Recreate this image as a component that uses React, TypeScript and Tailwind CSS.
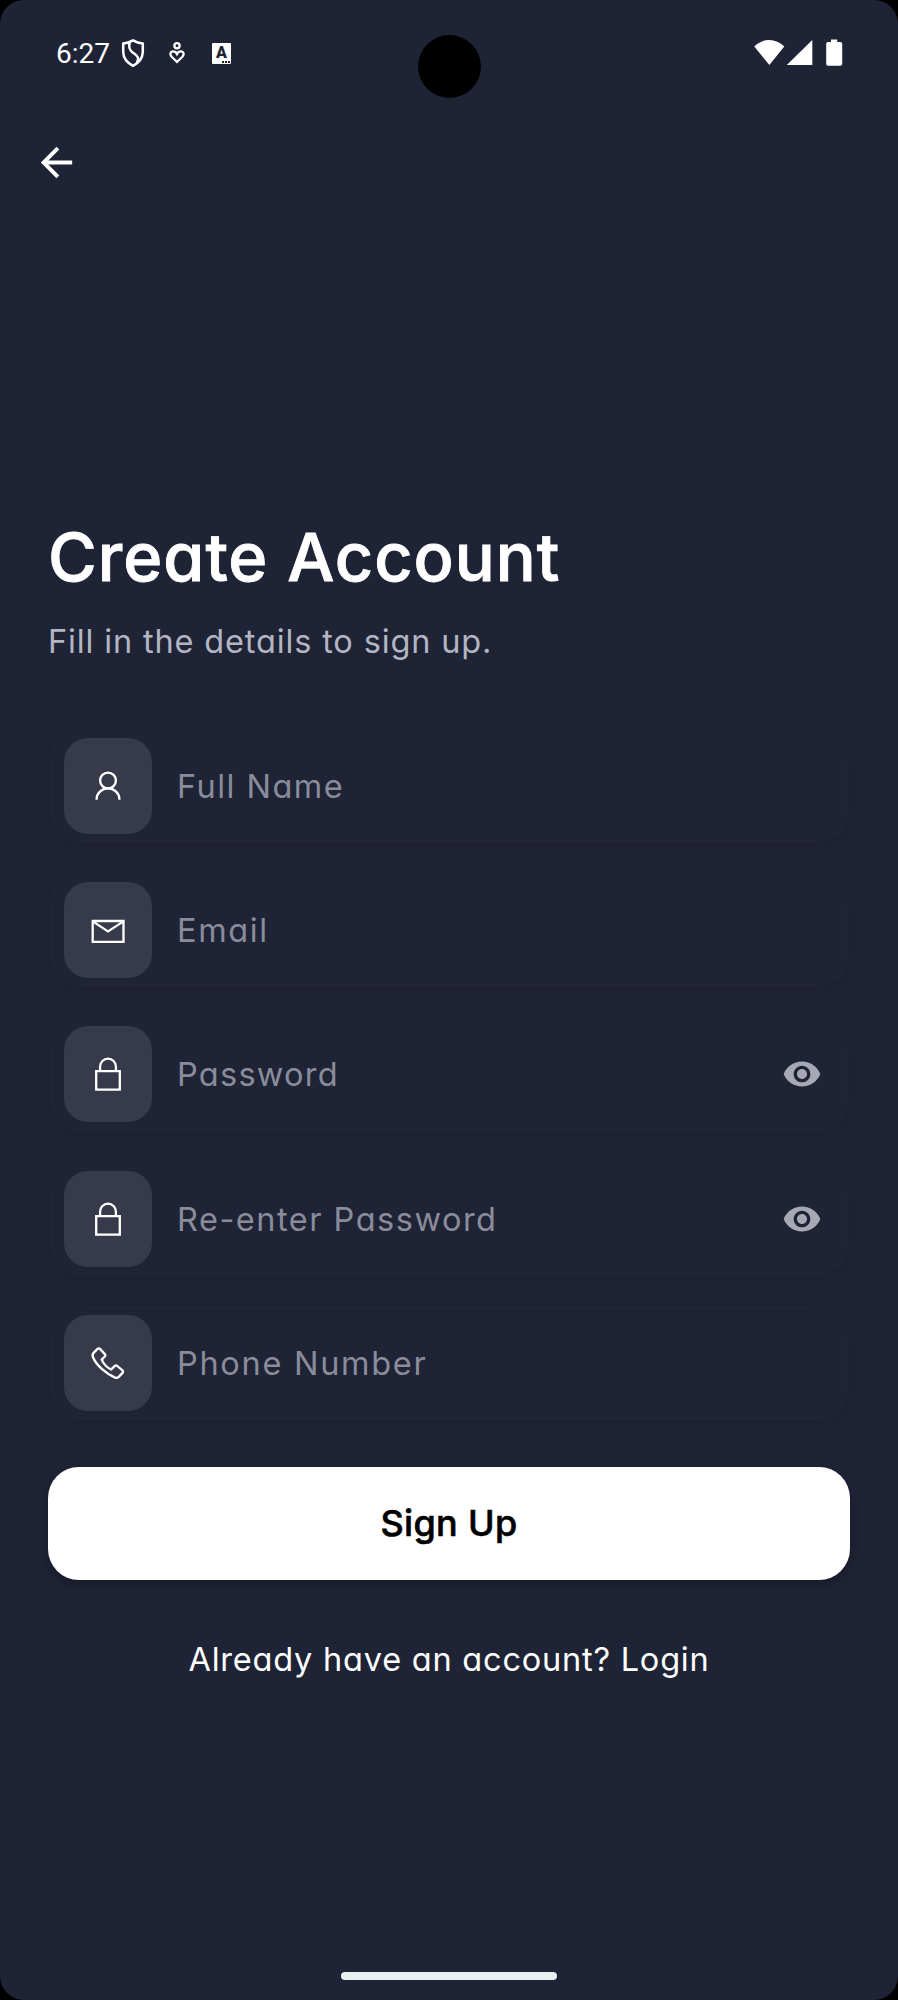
import type { ReactNode } from 'react';
import { MdArrowBack, MdVisibility } from 'react-icons/md';

const stroke = {
  fill: 'none',
  stroke: '#fff',
  strokeWidth: 2.3,
} as const;

function UserIcon() {
  return (
    <svg viewBox="0 0 40 40" className="size-10" {...stroke}>
      <circle cx="20" cy="14.5" r="7.9" />
      <path d="M8.6 33.8v-.6a11.4 10.8 0 0 1 22.8 0v.6" />
    </svg>
  );
}

function EnvelopeIcon() {
  return (
    <svg viewBox="0 0 40 40" className="size-10" {...stroke}>
      <path d="M4.7 11h30.8v20.8H4.7zM4.7 11.4 20 21.4l15.5-10" />
    </svg>
  );
}

function LockIcon() {
  return (
    <svg viewBox="0 0 40 40" className="size-10" {...stroke}>
      <path d="M8.2 17.2h23.6v18.4H8.2zM12.1 17.2v-4.6a7.9 7.9 0 0 1 15.8 0v4.6" />
    </svg>
  );
}

function PhoneIcon() {
  return (
    <svg viewBox="0 0 40 40" className="size-10" {...stroke} strokeLinejoin="round">
      <path d="M9.3 6.2 Q10.8 4.6 12.2 6.1 L17.1 11.4 Q17.9 12.4 17 13.2 L13.7 16.6 Q16.4 23 23 26.6 L26.6 23.1 Q28 21.8 29.3 23 L34.2 27.2 Q35.8 28.6 34.3 30.1 L30.7 33.9 Q29.2 35.5 27 34.6 C18.5 31 8.4 22.7 4.9 14 C4 11.7 4.7 10.7 6 9.4 Z" />
    </svg>
  );
}

function StatusBar() {
  return (
    <div className="flex h-[104px] shrink-0 items-start justify-between pl-[56px] pr-[54px]">
      <div className="flex h-[106px] items-center">
        <span className="w-[65px] whitespace-nowrap pt-[2px] font-[Roboto,sans-serif] text-[28px] leading-none text-white">6:27</span>
        <svg viewBox="0 0 24 30" className="h-[30px] w-6" fill="none" stroke="#fff" strokeWidth="2.5" strokeLinejoin="round">
          <path d="M12 2.4 C9 4.2 5.5 5.2 2.2 5.4 V14 C2.4 20.5 6.5 25 12 27.8 C17.5 25 21.6 20.5 21.8 14 V5.4 C18.5 5.2 15 4.2 12 2.4Z" />
          <path d="M8.8 4.5 C7.4 8.5 8 11.6 11.6 14.4 C15.8 17.5 19.2 19.6 15.8 24.6" />
        </svg>
        <svg viewBox="0 0 16 22" className="ml-[24px] h-[22px] w-4" fill="none" stroke="#fff" strokeWidth="2.3">
          <circle cx="8" cy="3.8" r="2.6" />
          <path d="M8 20 L2.6 14.7 C.6 12.5 1.2 9.6 3.9 9.4 C5.9 9.3 7.2 10.4 8 12 C8.8 10.4 10.1 9.3 12.1 9.4 C14.8 9.6 15.4 12.5 13.4 14.7Z" />
        </svg>
        <div className="relative ml-[27px] flex h-[21px] w-[19px] justify-center rounded-[1px] bg-white">
          <span className="font-[Roboto,sans-serif] text-[16px] font-black leading-[20px] text-[#1f2336]">A</span>
          <div className="absolute bottom-[1px] right-[1px] flex gap-px">
            <i className="size-[2px] bg-[#1f2336]" />
            <i className="size-[2px] bg-[#1f2336]" />
            <i className="size-[2px] bg-[#1f2336]" />
          </div>
        </div>
      </div>
      <svg viewBox="0 0 90 28" className="mt-[39px] h-7 w-[90px]" fill="#fff">
        <path d="M.3 7.6 C8.5-1.2 22-1.2 30.3 7.6 L15.3 26Z" />
        <path d="M32.8 26 58.3 1v25z" />
        <path d="M77 .4h6.2v2.5h3.2a1.8 1.8 0 0 1 1.8 1.8v20.2a1.8 1.8 0 0 1-1.8 1.8H74a1.8 1.8 0 0 1-1.8-1.8V4.7a1.8 1.8 0 0 1 1.8-1.8h3z" />
      </svg>
    </div>
  );
}

function Field({ icon, label, tracking, secret }: { icon: ReactNode; label: string; tracking: string; secret?: boolean }) {
  return (
    <div className="flex h-[113px] items-center rounded-[30px] border border-[#232637] bg-[#1f2336] pl-[13px] pr-[25px] shadow-[0_2px_10px_rgba(32,32,46,0.7)]">
      <div className="flex h-24 w-[88px] shrink-0 items-center justify-center rounded-[24px] bg-[#363a4a]">{icon}</div>
      <span className={`ml-[25px] flex-1 whitespace-nowrap pt-[2px] text-[32.5px] leading-[40px] text-[#8a8c9a] ${tracking}`}>{label}</span>
      {secret && <MdVisibility className="size-[40px] text-[#a6a8b3]" />}
    </div>
  );
}

export default function App() {
  return (
    <div className="h-[2000px] w-[898px] bg-black">
      <div className="relative flex h-full flex-col overflow-hidden rounded-[24px] bg-[#1f2336] font-[Inter,sans-serif] [font-feature-settings:'cv11']">
        <StatusBar />
        <div className="absolute left-[417.5px] top-[35px] size-[63px] rounded-full bg-black" />
        <button className="ml-[33px] mt-[35px] size-[47px] text-white">
          <MdArrowBack className="size-[47px]" />
        </button>

        <main className="mt-[331px] flex flex-col px-[48px]">
          <h1 className="whitespace-nowrap text-[66.5px] font-medium leading-[80px] tracking-[1px] text-white [-webkit-text-stroke:0.9px_#fff]">Create Account</h1>
          <p className="mt-[25px] whitespace-nowrap text-[32.5px] leading-[40px] tracking-[0.85px] text-[#b3b5c2]">Fill in the details to sign up.</p>

          <form className="mx-[2px] mt-[67px] flex flex-col gap-[31.4px]">
            <Field icon={<UserIcon />} label="Full Name" tracking="tracking-[1.45px]" />
            <Field icon={<EnvelopeIcon />} label="Email" tracking="tracking-[1.6px]" />
            <Field icon={<LockIcon />} label="Password" tracking="tracking-[1.25px]" secret />
            <Field icon={<LockIcon />} label="Re-enter Password" tracking="tracking-[1.5px]" secret />
            <Field icon={<PhoneIcon />} label="Phone Number" tracking="tracking-[1.7px]" />
          </form>

          <button className="mt-[47.4px] flex h-[113px] items-center justify-center rounded-[31px] bg-white text-[36px] font-medium leading-[44px] tracking-[0.3px] text-black shadow-[0_4px_8px_rgba(20,20,32,0.6)] [-webkit-text-stroke:0.6px_#000]">
            Sign Up
          </button>
          <p className="mt-[60px] whitespace-nowrap text-center text-[32.5px] leading-[40px] tracking-[0.78px] text-white">
            Already have an account? Login
          </p>
        </main>

        <div className="mb-[20px] mt-auto h-[8px] w-[216px] self-center rounded-full bg-[#ebeef2]" />
      </div>
    </div>
  );
}
